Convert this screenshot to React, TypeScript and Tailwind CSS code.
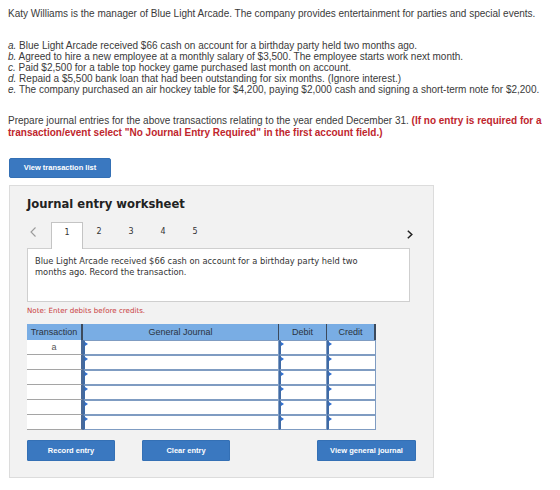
import React from "react";

function InputCell({ w }: { w: string }) {
  return (
    <div className={`${w} h-full relative bg-white border border-[#7f9cc2] border-l-[2px] border-l-[#3f6aa5]`}>
      <span className="absolute left-0 top-[1px] w-0 h-0 border-t-[2px] border-b-[2px] border-l-[3px] border-t-transparent border-b-transparent border-l-[#2f6fd0]" />
    </div>
  );
}

export default function App() {
  const rows = ["a", "", "", "", "", ""];
  return (
    <div className="w-[560px] h-[490px] bg-white overflow-hidden font-['Liberation_Sans',Arial,sans-serif] text-[#3a3a3a]">
      <div className="pl-[8px] pt-[8px]">
        <p className="text-[10px] leading-[12px] whitespace-nowrap">
          Katy Williams is the manager of Blue Light Arcade. The company provides entertainment for parties and special events.
        </p>
        <div className="mt-[20px] text-[10px] leading-[11px] whitespace-nowrap">
          <p><i>a.</i> Blue Light Arcade received $66 cash on account for a birthday party held two months ago.</p>
          <p><i>b.</i> Agreed to hire a new employee at a monthly salary of $3,500. The employee starts work next month.</p>
          <p><i>c.</i> Paid $2,500 for a table top hockey game purchased last month on account.</p>
          <p><i>d.</i> Repaid a $5,500 bank loan that had been outstanding for six months. (Ignore interest.)</p>
          <p><i>e.</i> The company purchased an air hockey table for $4,200, paying $2,000 cash and signing a short-term note for $2,200.</p>
        </div>
        <div className="mt-[20px] text-[10px] leading-[12px]">
          <p className="whitespace-nowrap">
            Prepare journal entries for the above transactions relating to the year ended December 31.{" "}
            <b className="text-[#c0262d]">(If no entry is required for a</b>
          </p>
          <p className="whitespace-nowrap">
            <b className="text-[#c0262d]">transaction/event select "No Journal Entry Required" in the first account field.)</b>
          </p>
        </div>
      </div>

      <div className="pl-[9px] pt-[19px]">
        <button className="block w-[102px] h-[20px] bg-[#3a78c0] rounded-[2px] text-white text-[7.5px] font-bold border border-[#3470b5]">
          View transaction list
        </button>

        <div className="mt-[7px] w-[425px] h-[293px] bg-[#f2f2f2] border border-[#dcdcdc] pl-[17px] pt-[11px]">
          <h2 className="font-['DejaVu_Sans',Verdana,sans-serif] font-bold text-[11.6px] leading-[15px] text-[#222]">
            Journal entry worksheet
          </h2>

          <div className="mt-[10px] w-[383px] relative">
            <div className="flex items-stretch h-[26px] font-['DejaVu_Sans',Verdana,sans-serif] text-[8px] text-[#333]">
              <div className="w-[24px] pl-[3px] pt-[5px]">
                <svg width="6" height="10" viewBox="0 0 6 10">
                  <polyline points="5.5,0.5 1,5 5.5,9.5" fill="none" stroke="#9a9a9a" strokeWidth="1.1" />
                </svg>
              </div>
              <div className="w-[32px] h-[27px] bg-white border border-[#c4c4c4] border-b-0 relative z-10 flex justify-center pt-[5px] leading-[10px]">1</div>
              {["2", "3", "4", "5"].map((n) => (
                <div key={n} className="w-[32px] flex justify-center pt-[5px] leading-[10px]">{n}</div>
              ))}
              <div className="flex-1" />
              <div className="-mr-[3px] pt-[8px]">
                <svg width="6" height="9" viewBox="0 0 6 9">
                  <polyline points="0.8,0.8 4.8,4.5 0.8,8.2" fill="none" stroke="#222" strokeWidth="1.5" />
                </svg>
              </div>
            </div>
            <div className="h-[54px] bg-white border border-[#cfcfcf] pl-[7px] pr-[40px] pt-[7px] font-['DejaVu_Sans',Verdana,sans-serif] text-[8.3px] leading-[11px] text-[#333]">
              Blue Light Arcade received $66 cash on account for a birthday party held two months ago. Record the transaction.
            </div>
          </div>

          <p className="mt-[4px] font-['DejaVu_Sans',Verdana,sans-serif] text-[7.1px] leading-[10px] text-[#c94040]">
            Note: Enter debits before credits.
          </p>

          <div className="mt-[8px] w-[349px] text-[9px] text-[#2b3340]">
            <div className="flex h-[16px] bg-[#79ade4] border-r-[2px] border-[#3c4a5c] leading-[16px]">
              <div className="w-[56px] text-center border-r-[2px] border-[#3c4a5c]">Transaction</div>
              <div className="w-[196px] text-center border-r border-[#3c4a5c]">General Journal</div>
              <div className="w-[48px] text-center border-r border-[#3c4a5c]">Debit</div>
              <div className="flex-1 text-center">Credit</div>
            </div>
            {rows.map((r, i) => (
              <div key={i} className="flex h-[15px]">
                <div className="w-[56px] bg-white border-b border-[#a5a5a5] text-center leading-[14px] text-[#555] border-r-[2px] border-r-[#4a6a98]">{r}</div>
                <InputCell w="w-[196px]" />
                <InputCell w="w-[48px]" />
                <InputCell w="w-[49px]" />
              </div>
            ))}
          </div>

          <div className="mt-[10px] flex text-white text-[7.5px] font-bold">
            <button className="w-[88px] h-[21px] bg-[#3a78c0] border border-[#3470b5] rounded-[1px]">Record entry</button>
            <button className="ml-[27px] w-[88px] h-[21px] bg-[#3a78c0] border border-[#3470b5] rounded-[1px]">Clear entry</button>
            <button className="ml-[87px] w-[99px] h-[21px] bg-[#3a78c0] border border-[#3470b5] rounded-[1px]">View general journal</button>
          </div>
        </div>
      </div>
    </div>
  );
}
